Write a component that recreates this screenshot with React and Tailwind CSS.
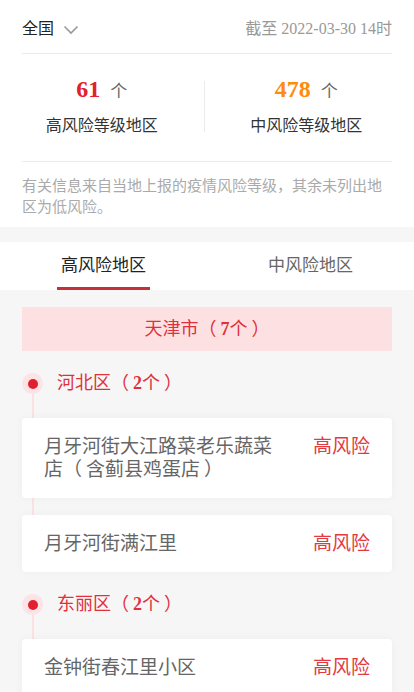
import React, { useState } from 'react';

const font = { fontFamily: '"Liberation Serif", "Noto Sans CJK SC", serif' };

const districts = [
  {
    name: '河北区',
    count: 2,
    places: [['月牙河街大江路菜老乐蔬菜店', '含蓟县鸡蛋店'], ['月牙河街满江里']],
  },
  {
    name: '东丽区',
    count: 2,
    places: [['金钟街春江里小区']],
  },
];

// fullwidth brackets with the loose spacing of the original font
const L = () => <span className="mr-[4px]">（</span>;
const R = () => <span className="ml-[4px]">）</span>;

function Chevron() {
  return (
    <svg width="16" height="10" viewBox="0 0 16 10" className="ml-[9px] mt-[2px]">
      <path d="M1.5 1.5 L8 8 L14.5 1.5" fill="none" stroke="#999" strokeWidth="1.6" />
    </svg>
  );
}

function District({ d }) {
  return (
    <div className="relative mt-[22px]">
      {/* timeline line */}
      <div className="absolute left-[10px] top-[12px] bottom-[10px] w-[2px] bg-[#fde0e3]" />
      <div className="relative flex items-center h-[21px]">
        <div className="w-[21px] h-[21px] rounded-full bg-[#fde3e5] flex items-center justify-center">
          <div className="w-[10px] h-[10px] rounded-full bg-[#e0202f]" />
        </div>
        <div className="ml-[14px] text-[18px] leading-[21px] text-[#e0303c]">
          {d.name}<L /><span className="font-bold">{d.count}</span>个<R />
        </div>
      </div>
      <div className="relative mt-[24px] flex flex-col gap-[17px]">
        {d.places.map(([name, note]) => (
          <div
            key={name}
            className="bg-white rounded-[4px] shadow-[0_0_10px_rgba(0,0,0,0.04)] px-[22px] py-[17px] flex justify-between items-start"
          >
            <div className="w-[246px] text-[19px] leading-[23px] text-[#666]">
              {name}
              {note && (
                <>
                  <L />{note}<R />
                </>
              )}
            </div>
            <div className="text-[19px] leading-[23px] text-[#e33a3f]">高风险</div>
          </div>
        ))}
      </div>
    </div>
  );
}

export default function App() {
  const [tab, setTab] = useState(0);

  return (
    <div className="w-[414px] min-h-[692px] bg-[#f6f6f6]" style={font}>
      <div className="bg-white px-[22px]">
        <div className="flex items-center justify-between pt-[18px] pb-[13px] border-b border-[#ececec]">
          <div className="flex items-center text-[16px] leading-[22px] text-[#222]">
            全国
            <Chevron />
          </div>
          <div className="text-[16px] leading-[22px] text-[#999]">截至 2022-03-30 14时</div>
        </div>

        <div className="-mx-[22px] px-[22px]">
          <div className="-mx-[22px] flex pt-[24px] pb-[26px]">
            <div className="flex-1 flex flex-col items-center">
              <div className="h-[22px] leading-[22px] flex items-baseline">
                <span className="text-[24px] font-bold text-[#e0202f]">61</span>
                <span className="ml-[10px] text-[17px] text-[#666]">个</span>
              </div>
              <div className="mt-[17px] text-[16px] leading-[18px] text-[#333]">高风险等级地区</div>
            </div>
            <div className="w-px my-[3px] bg-[#ececec]" />
            <div className="flex-1 flex flex-col items-center pr-[6px]">
              <div className="h-[22px] leading-[22px] flex items-baseline">
                <span className="text-[24px] font-bold text-[#ff8a0c]">478</span>
                <span className="ml-[10px] text-[17px] text-[#666]">个</span>
              </div>
              <div className="mt-[17px] text-[16px] leading-[18px] text-[#333]">中风险等级地区</div>
            </div>
          </div>
        </div>

        <p className="border-t border-[#ececec] pt-[14px] pb-[9px] text-[15px] leading-[21px] text-[#aaa]">
          有关信息来自当地上报的疫情风险等级，其余未列出地区为低风险。
        </p>
      </div>

      <div className="mt-[15px] bg-white flex h-[48px]">
        {['高风险地区', '中风险地区'].map((t, i) => (
          <button
            key={t}
            onClick={() => setTab(i)}
            className="flex-1 flex flex-col items-center justify-end"
          >
            <span className={`text-[17px] leading-[22px] ${tab === i ? 'text-[#222]' : 'text-[#666]'}`}>{t}</span>
            <span className={`mt-[10px] h-[3px] w-[93px] ${tab === i ? 'bg-[#c4303a]' : 'bg-transparent'}`} />
          </button>
        ))}
      </div>

      <div className="px-[22px] pb-[20px]">
        <div className="mt-[17px] h-[44px] bg-[#fde0e2] flex items-center justify-center text-[18px] text-[#e0303c]">
          天津市<L /><span className="font-bold">7</span>个<R />
        </div>
        {districts.map((d) => (
          <District key={d.name} d={d} />
        ))}
      </div>
    </div>
  );
}
